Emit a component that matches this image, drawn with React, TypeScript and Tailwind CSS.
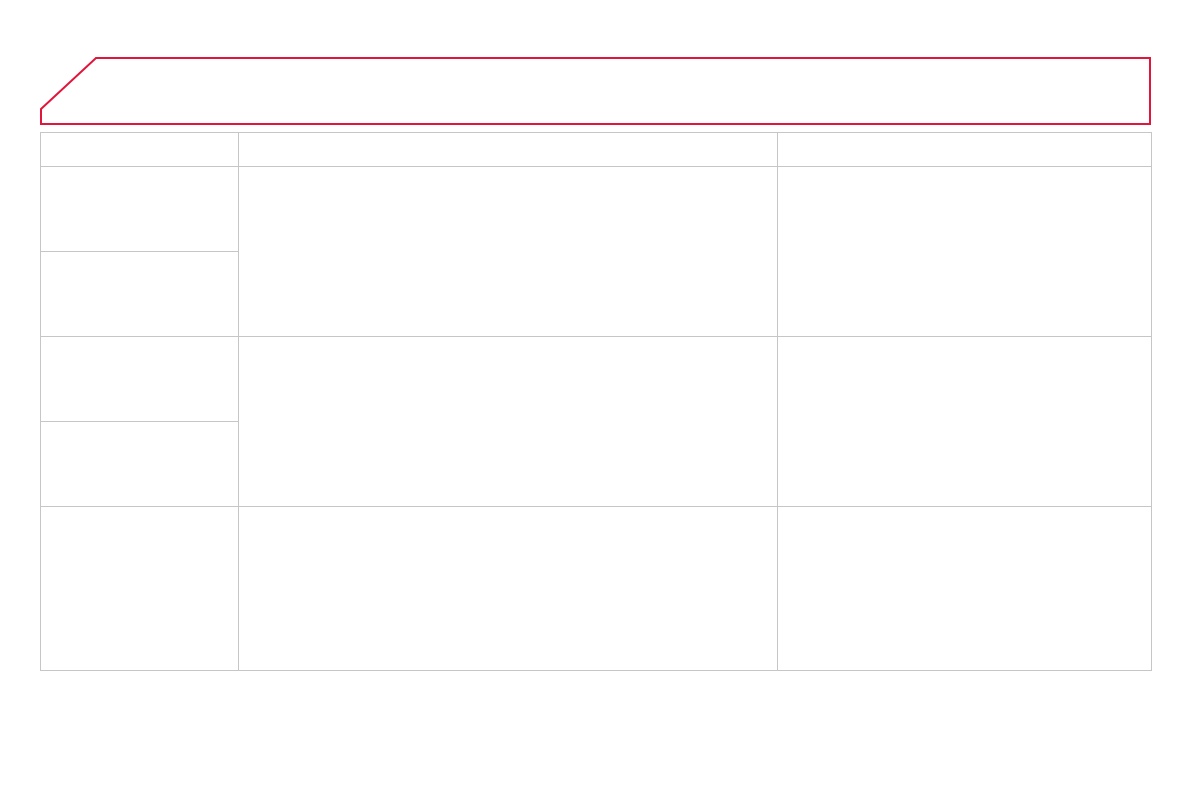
import React from 'react';

const cell = 'border-r border-b border-[#c6c6c6]';

export default function App() {
  return (
    <div className="w-[1191px] h-[794px] bg-white pt-[57px] pl-[40px] font-['Liberation_Sans',sans-serif]">
      {/* Header banner */}
      <div className="relative w-[1111px] h-[68px]">
        <svg className="absolute inset-0" width="1111" height="68" viewBox="0 0 1111 68">
          <path
            d="M1 52 L56 1 L1110 1 L1110 67 L1 67 Z"
            fill="none"
            stroke="#e2163c"
            strokeWidth="2"
          />
        </svg>
      </div>

      {/* Table */}
      <div className="mt-[7px] w-[1112px] border-t border-l border-[#c6c6c6] grid grid-cols-[198px_539px_374px] grid-rows-[34px_85px_85px_85px_85px_164px]">
        <div className={cell}></div>
        <div className={cell}></div>
        <div className={cell}></div>

        <div className={cell}></div>
        <div className={`${cell} row-span-2`}></div>
        <div className={`${cell} row-span-2`}></div>
        <div className={cell}></div>

        <div className={cell}></div>
        <div className={`${cell} row-span-2`}></div>
        <div className={`${cell} row-span-2`}></div>
        <div className={cell}></div>

        <div className={cell}></div>
        <div className={cell}></div>
        <div className={cell}></div>
      </div>
    </div>
  );
}
